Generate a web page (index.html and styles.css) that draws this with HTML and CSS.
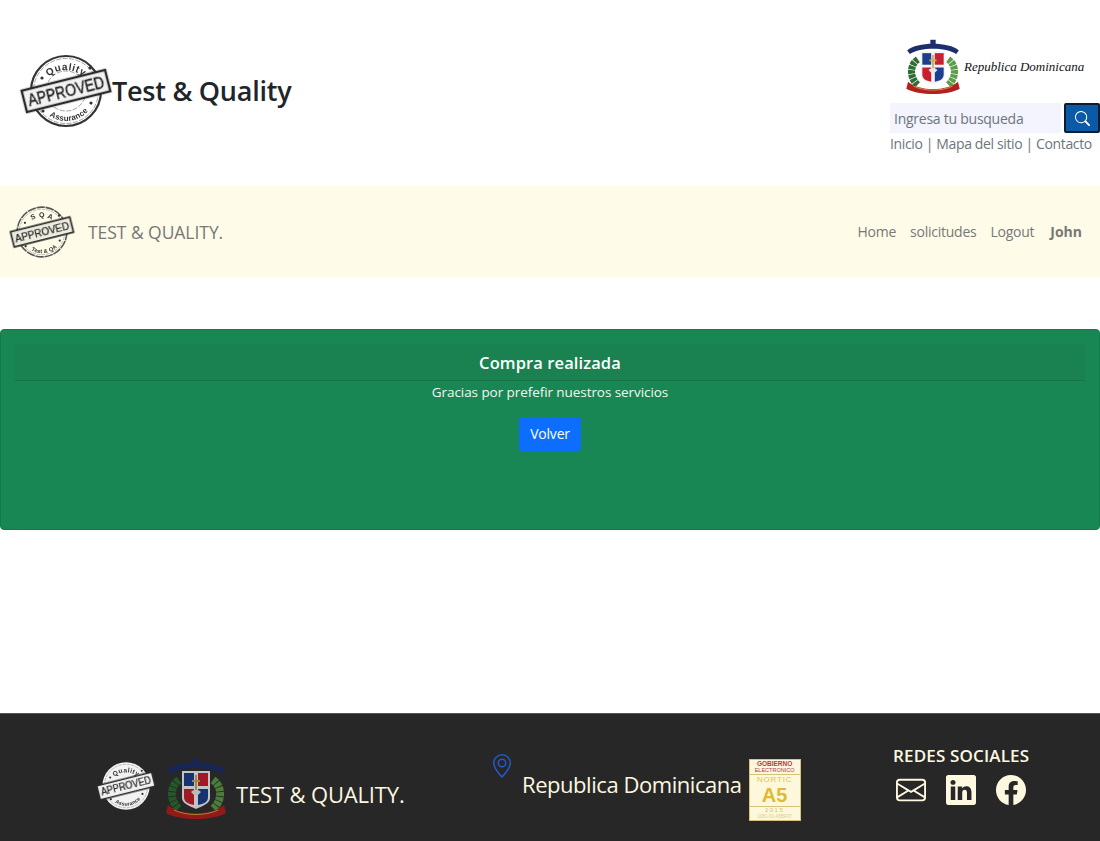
FILE: index.html
```html
<!DOCTYPE html>
<html lang="es">
<head>
<meta charset="utf-8">
<title>Test &amp; Quality</title>
<link rel="stylesheet" href="styles.css">
</head>
<body>
<svg class="defs" width="0" height="0" aria-hidden="true">
  <defs>
    <symbol id="emblem" viewBox="0 0 60 64">
      <path d="M13 24 C4 30 3 44 13 53" fill="none" stroke="#2c6e33" stroke-width="8" stroke-dasharray="4 .8"/>
      <path d="M47 24 C56 30 57 44 47 53" fill="none" stroke="#5d9c49" stroke-width="8" stroke-dasharray="4 .8"/>
      <path d="M1 14 C12 4 48 4 59 14 L56 18 C44 10 16 10 4 18 Z" fill="#1d2f6b"/>
      <path d="M27 2h6v8h-6z" fill="#1d2f6b"/>
      <path d="M16 15h28v27c0 5-7 8-14 11-7-3-14-6-14-11z" fill="#f4f4f4"/>
      <path d="M18 17h10v13H18z" fill="#1d3f8f"/>
      <path d="M32 17h10v13H32z" fill="#c8202f"/>
      <path d="M18 33h10v16c-6-1-10-3-10-8z" fill="#c8202f"/>
      <path d="M32 33h10v8c0 5-4 7-10 8z" fill="#1d3f8f"/>
      <path d="M29 19h2v5h3v2h-3v8h-2v-8h-3v-2h3z" fill="#c9a95a"/>
      <path d="M25 36 C28 33 32 33 35 36 L32 39 H28 Z" fill="#e8e8e8"/>
      <path d="M2 49 C14 60 46 60 58 49 L60 57 C46 65 14 65 0 57 Z" fill="#b3201f"/>
      <path d="M8 54 C20 60 40 60 52 54" fill="none" stroke="#d6a23a" stroke-width="1"/>
    </symbol>
    <symbol id="ico-search" viewBox="0 0 16 16"><path d="M11.742 10.344a6.5 6.5 0 1 0-1.397 1.398h-.001c.03.04.062.078.098.115l3.85 3.85a1 1 0 0 0 1.415-1.414l-3.85-3.85a1.007 1.007 0 0 0-.115-.1zM12 6.5a5.5 5.5 0 1 1-11 0 5.5 5.5 0 0 1 11 0z"/></symbol>
    <symbol id="dots" viewBox="0 0 90 76">
      <circle cx="21" cy="25" r="1.6"/><circle cx="69" cy="15" r="1.6"/>
      <circle cx="22" cy="58" r="1.6"/><circle cx="70" cy="50" r="1.6"/>
    </symbol>
  </defs>
</svg>

<header class="top">
  <div class="brand">
    <svg class="stamp stamp-lg" viewBox="0 0 90 76">
      <circle cx="45" cy="38" r="35" class="ring"/>
      <circle cx="45" cy="38" r="32.5" class="ring-thin"/>
      <circle cx="45" cy="38" r="20" class="ring-thin"/>
      <use href="#dots" width="90" height="76" class="dot"/>
      <path id="arc1" d="M20 34 A27 27 0 0 1 70 34" fill="none"/>
      <path id="arc2" d="M15 38 A30 30 0 0 0 75 38" fill="none"/>
      <text class="arc-text"><textPath href="#arc1" startOffset="50%" text-anchor="middle">Quality</textPath></text>
      <text class="arc-text arc-low"><textPath href="#arc2" startOffset="54%" text-anchor="middle">Assurance</textPath></text>
      <g transform="rotate(-14 45 38)">
        <rect x="2" y="27" width="86" height="22" class="band"/>
        <text x="45" y="44" class="band-text" text-anchor="middle" textLength="78" lengthAdjust="spacingAndGlyphs">APPROVED</text>
      </g>
    </svg>
    <h1 class="title">Test &amp; Quality</h1>
  </div>
  <div class="tools">
    <div class="gov">
      <svg class="gov-emblem"><use href="#emblem"/></svg>
      <span class="gov-name">Republica Dominicana</span>
    </div>
    <form class="search">
      <input class="search-input" type="text" placeholder="Ingresa tu busqueda">
      <button class="search-btn" type="button" aria-label="Buscar"><svg class="search-ico"><use href="#ico-search"/></svg></button>
    </form>
    <div class="links">Inicio | Mapa del sitio | Contacto</div>
  </div>
</header>

<nav class="navbar">
  <div class="nav-brand">
    <svg class="stamp stamp-nav" viewBox="0 0 90 76">
      <circle cx="45" cy="38" r="35" class="ring"/>
      <circle cx="45" cy="38" r="32" class="ring-thin"/>
      <use href="#dots" width="90" height="76" class="dot"/>
      <path id="arc3" d="M20 34 A27 27 0 0 1 70 34" fill="none"/>
      <path id="arc4" d="M15 38 A30 30 0 0 0 75 38" fill="none"/>
      <text class="arc-text"><textPath href="#arc3" startOffset="50%" text-anchor="middle">S Q A</textPath></text>
      <text class="arc-text arc-low"><textPath href="#arc4" startOffset="54%" text-anchor="middle">Test &amp; QA</textPath></text>
      <g transform="rotate(-14 45 38)">
        <rect x="2" y="27" width="86" height="22" class="band"/>
        <text x="45" y="44" class="band-text" text-anchor="middle" textLength="78" lengthAdjust="spacingAndGlyphs">APPROVED</text>
      </g>
    </svg>
    <span class="nav-name">TEST &amp; QUALITY.</span>
  </div>
  <ul class="nav-links">
    <li>Home</li>
    <li>solicitudes</li>
    <li>Logout</li>
    <li class="nav-user">John</li>
  </ul>
</nav>

<main class="main">
  <section class="alert">
    <h2 class="alert-head">Compra realizada</h2>
    <p class="alert-text">Gracias por prefefir nuestros servicios</p>
    <a class="btn" href="#">Volver</a>
  </section>
</main>

<footer class="footer">
  <div class="foot-left">
    <svg class="stamp stamp-foot" viewBox="0 0 90 76">
      <circle cx="45" cy="38" r="36" class="disc"/>
      <circle cx="45" cy="38" r="33" class="ring-thin"/>
      <use href="#dots" width="90" height="76" class="dot"/>
      <path id="arc5" d="M20 34 A27 27 0 0 1 70 34" fill="none"/>
      <path id="arc6" d="M15 38 A30 30 0 0 0 75 38" fill="none"/>
      <text class="arc-text"><textPath href="#arc5" startOffset="50%" text-anchor="middle">Quality</textPath></text>
      <text class="arc-text arc-low"><textPath href="#arc6" startOffset="54%" text-anchor="middle">Assurance</textPath></text>
      <g transform="rotate(-14 45 38)">
        <rect x="2" y="27" width="86" height="22" class="band"/>
        <text x="45" y="44" class="band-text" text-anchor="middle" textLength="78" lengthAdjust="spacingAndGlyphs">APPROVED</text>
      </g>
    </svg>
    <svg class="foot-emblem"><use href="#emblem"/></svg>
    <span class="foot-name">TEST &amp; QUALITY.</span>
  </div>
  <div class="foot-mid">
    <svg class="pin" viewBox="0 0 16 16"><path d="M12.166 8.94c-.524 1.062-1.234 2.12-1.96 3.07A31.493 31.493 0 0 1 8 14.58a31.481 31.481 0 0 1-2.206-2.57c-.726-.95-1.436-2.008-1.96-3.07C3.304 7.867 3 6.862 3 6a5 5 0 0 1 10 0c0 .862-.305 1.867-.834 2.94zM8 16s6-5.686 6-10A6 6 0 0 0 2 6c0 4.314 6 10 6 10z"/><path d="M8 8a2 2 0 1 1 0-4 2 2 0 0 1 0 4zm0 1a3 3 0 1 0 0-6 3 3 0 0 0 0 6z"/></svg>
    <span class="foot-country">Republica Dominicana</span>
    <div class="nortic">
      <div class="n-head">
        <span class="n-top">GOBIERNO</span>
        <span class="n-sub">ELECTRONICO</span>
      </div>
      <span class="n-name">NORTIC</span>
      <span class="n-a5">A5</span>
      <span class="n-year">2015</span>
      <span class="n-code">1081-01-A5BF07</span>
    </div>
  </div>
  <div class="foot-right">
    <h3 class="social-title">REDES SOCIALES</h3>
    <div class="social">
      <svg class="social-ico" viewBox="0 0 16 16"><path d="M0 4a2 2 0 0 1 2-2h12a2 2 0 0 1 2 2v8a2 2 0 0 1-2 2H2a2 2 0 0 1-2-2V4Zm2-1a1 1 0 0 0-1 1v.217l7 4.2 7-4.2V4a1 1 0 0 0-1-1H2Zm13 2.383-4.708 2.825L15 11.105V5.383Zm-.034 6.876-5.64-3.471L8 9.583l-1.326-.795-5.64 3.47A1 1 0 0 0 2 13h12a1 1 0 0 0 .966-.741ZM1 11.105l4.708-2.897L1 5.383v5.722Z"/></svg>
      <svg class="social-ico" viewBox="0 0 16 16"><path d="M0 1.146C0 .513.526 0 1.175 0h13.65C15.474 0 16 .513 16 1.146v13.708c0 .633-.526 1.146-1.175 1.146H1.175C.526 16 0 15.487 0 14.854V1.146zm4.943 12.248V6.169H2.542v7.225h2.401zm-1.2-8.212c.837 0 1.358-.554 1.358-1.248-.015-.709-.52-1.248-1.342-1.248-.822 0-1.359.54-1.359 1.248 0 .694.521 1.248 1.327 1.248h.016zm4.908 8.212V9.359c0-.216.016-.432.08-.586.173-.431.568-.878 1.232-.878.869 0 1.216.662 1.216 1.634v3.865h2.401V9.25c0-2.22-1.184-3.252-2.764-3.252-1.274 0-1.845.7-2.165 1.193v.025h-.016a5.54 5.54 0 0 1 .016-.025V6.169h-2.4c.03.678 0 7.225 0 7.225h2.4z"/></svg>
      <svg class="social-ico" viewBox="0 0 16 16"><path d="M16 8.049c0-4.446-3.582-8.05-8-8.05C3.58 0-.002 3.603-.002 8.05c0 4.017 2.926 7.347 6.75 7.951v-5.625h-2.03V8.05H6.75V6.275c0-2.017 1.195-3.131 3.022-3.131.876 0 1.791.157 1.791.157v1.98h-1.009c-.993 0-1.303.621-1.303 1.258v1.51h2.218l-.354 2.326H9.25V16c3.824-.604 6.75-3.934 6.75-7.951z"/></svg>
    </div>
  </div>
</footer>
</body>
</html>
```
FILE: styles.css
```css
* { box-sizing: border-box; }
html, body { margin: 0; padding: 0; }
body {
  width: 1100px;
  height: 841px;
  overflow: hidden;
  background: #fff;
  font-family: "Open Sans", "Noto Sans", sans-serif;
  color: #212529;
}
.defs { display: block; height: 0; }

/* stamps */
.stamp { display: block; flex: none; overflow: visible; }
.stamp-lg { width: 90px; height: 76px; filter: blur(.4px); }
.stamp-nav { width: 64px; height: 54px; filter: blur(.4px); }
.stamp-foot { width: 60px; height: 50px; filter: blur(.3px); }
.ring { fill: #fff; stroke: #333; stroke-width: 2.2; }
.stamp-nav .ring { fill: none; stroke: #555; stroke-dasharray: 12 1; }
.ring-thin { fill: none; stroke: #8a8a8a; stroke-width: .8; stroke-dasharray: 5 1.5; }
.dot { fill: #333; }
.disc { fill: #f2f2f2; }
.arc-text { font: 700 10px "Liberation Sans", sans-serif; fill: #333; letter-spacing: .6px; }
.arc-low { font-size: 8px; letter-spacing: .2px; }
.band { fill: #f2f2f2; stroke: #2b2b2b; stroke-width: 2.4; }
.stamp-nav .band { fill: #ececdf; }
.band-text { font: 400 16px "Liberation Sans", sans-serif; fill: #1e1e1e; stroke: #1e1e1e; stroke-width: .35; }

/* header */
.top {
  height: 186px;
  display: flex;
  justify-content: space-between;
  padding: 38px 0 0 21px;
}
.brand { display: flex; align-items: center; height: 105px; }
.title {
  margin: 2px 0 0 1px;
  font-size: 27px;
  font-weight: 600;
  line-height: 1.2;
  letter-spacing: -.25px;
  color: #212529;
}
.tools { width: 210px; display: flex; flex-direction: column; }
.gov { height: 65px; display: flex; align-items: flex-start; padding-left: 16px; }
.gov-emblem { width: 54px; height: 57px; flex: none; filter: blur(.3px); }
.gov-name {
  margin: 21px 0 0 4px;
  font: italic 400 13px "Liberation Serif", serif;
  color: #111;
  white-space: nowrap;
}
.search { display: flex; height: 30px; }
.search-input {
  width: 171px;
  height: 30px;
  padding: 0 4px;
  border: 0;
  outline: 0;
  background: #f3f4fd;
  font: 400 14px "Open Sans", sans-serif;
  letter-spacing: -.25px;
  color: #6c757d;
}
.search-input::placeholder { color: #6c757d; opacity: 1; }
.search-btn {
  width: 36px;
  height: 30px;
  margin-left: 3px;
  padding: 0;
  display: flex;
  align-items: center;
  justify-content: center;
  background: #0b5aa8;
  border: 2px solid #0b1d33;
  border-radius: 2px;
}
.search-ico { width: 15px; height: 15px; fill: #fff; }
.links {
  margin-top: 1px;
  font-size: 14px;
  line-height: 20px;
  letter-spacing: -.37px;
  color: #6c757d;
  white-space: nowrap;
}

/* navbar */
.navbar {
  height: 91px;
  background: #fefce8;
  display: flex;
  align-items: center;
  justify-content: space-between;
  padding: 0 18px 0 10px;
}
.nav-brand { display: flex; align-items: center; }
.nav-name {
  margin-left: 14px;
  font-size: 17.5px;
  letter-spacing: -.05px;
  color: #777;
}
.nav-links {
  display: flex;
  gap: 14px;
  margin: 0;
  padding: 0;
  list-style: none;
  font-size: 14px;
  letter-spacing: -.25px;
  color: #777;
}
.nav-user { margin-left: 2px; font-weight: 700; letter-spacing: 0; }

/* main */
.main { padding-top: 52px; }
.alert {
  height: 201px;
  padding: 14px 14px 0;
  background: #198754;
  border: 1px solid #157a4b;
  border-radius: 4px;
  text-align: center;
  color: #fff;
}
.alert-head {
  margin: 0;
  height: 37px;
  line-height: 37px;
  font-size: 16.5px;
  font-weight: 600;
  letter-spacing: .1px;
  background: #1a8151;
  border-bottom: 1px solid #177349;
}
.alert-text {
  margin: 1px 0 15px;
  font-size: 13.5px;
  line-height: 20px;
  letter-spacing: -.07px;
  color: #f1f7f3;
}
.btn {
  display: inline-block;
  width: 62px;
  height: 34px;
  line-height: 34px;
  background: #0d6efd;
  border-radius: 3px;
  font-size: 14px;
  letter-spacing: -.2px;
  color: #fff;
  text-decoration: none;
}

/* footer */
.footer {
  margin-top: 183px;
  height: 128px;
  background: #272727;
  border-top: 1px solid #555;
  color: #fff8e1;
  display: grid;
  grid-template-columns: 395px 401px auto;
  padding-left: 96px;
}
.foot-left { display: flex; align-items: center; padding-top: 31px; height: 128px; }
.stamp-foot { margin-top: -16px; }
.foot-emblem { width: 62px; height: 64px; margin: -11px 0 0 9px; flex: none; filter: brightness(.8) blur(.3px); }
.foot-name { margin: 0 0 0 9px; font-size: 22px; letter-spacing: -.15px; white-space: nowrap; }
.foot-mid { display: flex; align-items: flex-start; }
.pin { width: 24px; height: 24px; margin: 40px 0 0 -1px; fill: #2459c9; flex: none; }
.foot-country { margin: 55px 0 0 8px; font-size: 22px; line-height: 30px; letter-spacing: -.45px; white-space: nowrap; }
.nortic {
  width: 52px;
  height: 62px;
  margin: 45px 0 0 7px;
  flex: none;
  background: #fdf8dc;
  border: 1px solid #d7c27a;
  display: flex;
  flex-direction: column;
  align-items: center;
  font-family: "Liberation Sans", sans-serif;
  overflow: hidden;
}
.n-head { width: 100%; height: 15px; border-bottom: 1px solid #d7c27a; display: flex; flex-direction: column; align-items: center; }
.n-top { font-size: 6.5px; line-height: 7px; font-weight: 700; color: #b33a50; }
.n-sub { font-size: 5.5px; line-height: 6px; color: #b33a50; white-space: nowrap; }
.n-name { font-size: 8px; line-height: 9px; letter-spacing: .8px; color: #e6c43a; }
.n-a5 { height: 23px; font-size: 20px; font-weight: 700; color: #e0ba30; line-height: 23px; border-bottom: 1px solid #d7c27a; width: 100%; text-align: center; }
.n-year { font-size: 6px; line-height: 7px; letter-spacing: 1.5px; color: #d7c27a; }
.n-code { font-size: 4.5px; line-height: 5px; color: #e0cb84; white-space: nowrap; }
.foot-right { padding: 31px 0 0 1px; }
.social-title { margin: 0; font-size: 17px; font-weight: 600; line-height: 22px; letter-spacing: .15px; white-space: nowrap; color: #fff8e1; }
.social { display: flex; gap: 20px; margin: 8px 0 0 3px; }
.social-ico { width: 30px; height: 30px; fill: #fff8e1; flex: none; }
```
